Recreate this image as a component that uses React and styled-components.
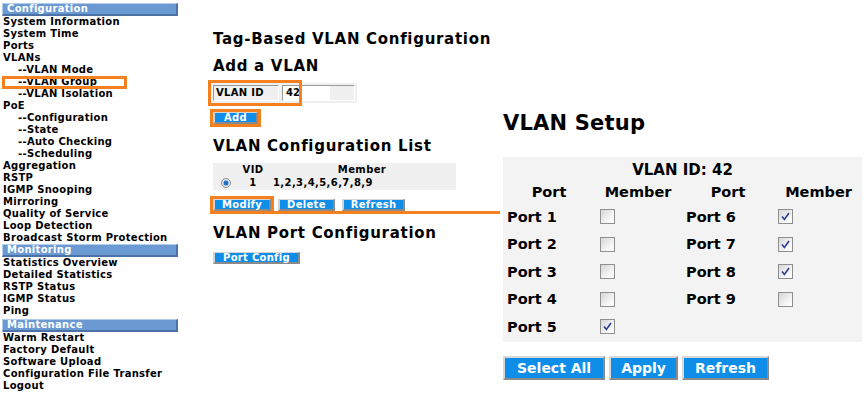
import React from "react";
import styled, { createGlobalStyle, css } from "styled-components";

const ORANGE = "#f5801f";
const BLUE = "#0e8ee8";

const GlobalStyle = createGlobalStyle`
    body {
        margin: 0;
        background: #fff;
        color: #000;
        font-family: "DejaVu Sans", Verdana, sans-serif;
        font-weight: bold;
    }
`;

const Page = styled.div`
    display: flex;
    align-items: flex-start;
    width: 868px;
    height: 395px;
    overflow: hidden;
`;

/* ---------- sidebar ---------- */

const Sidebar = styled.nav`
    width: 205px;
    flex-shrink: 0;
    box-sizing: border-box;
    padding: 3px 0 0 2px;
`;

const MenuHeader = styled.div`
    width: 176px;
    height: 13px;
    box-sizing: border-box;
    margin-top: ${(p) => p.$gap || 0}px;
    padding-left: 4px;
    background: #6b9ad3;
    border-style: solid;
    border-width: 1px 2px 2px 1px;
    border-color: #b3cdec #4a72a6 #4a72a6 #b3cdec;
    color: #fff;
    font-size: 10px;
    line-height: 10px;
    letter-spacing: 0.3px;
`;

const MenuItem = styled.div`
    position: relative;
    height: 12px;
    line-height: 12px;
    padding-left: ${(p) => (p.$sub ? 16 : 1)}px;
    font-size: 10px;
    letter-spacing: 0.3px;
    white-space: nowrap;
    ${(p) =>
        p.$active &&
        css`
            &::after {
                content: "";
                position: absolute;
                left: 0;
                top: 0;
                width: 125px;
                height: 13px;
                box-sizing: border-box;
                border: 3px solid ${ORANGE};
            }
        `}
`;

/* ---------- middle panel ---------- */

const Middle = styled.section`
    width: 295px;
    flex-shrink: 0;
    box-sizing: border-box;
    padding: 30px 0 0 8px;
    display: flex;
    flex-direction: column;
    align-items: flex-start;
`;

const Heading = styled.h2`
    margin: ${(p) => p.$top || 0}px 0 0 0;
    font-size: 15px;
    line-height: 18px;
    letter-spacing: 0.7px;
    white-space: nowrap;
`;

const InputRow = styled.div`
    position: relative;
    margin: 8px 0 0 -2px;
    width: 146px;
    height: 20px;
    box-sizing: border-box;
    padding: 2px;
    display: flex;
    gap: 3px;
    background: #f0f0f0;
    font-size: 10px;
    &::after {
        content: "";
        position: absolute;
        left: -3px;
        top: -3px;
        width: 94px;
        height: 26px;
        box-sizing: border-box;
        border: 3px solid ${ORANGE};
    }
`;

const LabelCell = styled.div`
    width: 66px;
    box-sizing: border-box;
    padding-left: 2px;
    border: 1px solid;
    border-color: #9a9a9a #fff #fff #9a9a9a;
    line-height: 14px;
    letter-spacing: 0.3px;
`;

const TextBox = styled.div`
    flex: 1;
    display: flex;
    border: 1px solid;
    border-color: #9a9a9a #fff #fff #9a9a9a;
    span {
        width: 47px;
        background: #fff;
        padding-left: 3px;
        line-height: 14px;
        box-sizing: border-box;
    }
`;

const SmallButton = styled.button`
    position: relative;
    height: 12px;
    box-sizing: border-box;
    padding: 0 ${(p) => p.$pad || 8}px;
    background: ${BLUE};
    border: 1px solid;
    border-width: 1px 2px 2px 2px;
    border-color: #d4d4d4 #8a8a8a #8a8a8a #d4d4d4;
    color: #fff;
    font-family: inherit;
    font-weight: bold;
    font-size: 10px;
    line-height: 8px;
    letter-spacing: 0.3px;
    ${(p) =>
        p.$marked &&
        css`
            outline: 3px solid ${ORANGE};
            outline-offset: 0;
        `}
`;

const Connector = styled.span`
    position: absolute;
    left: calc(100% + 3px);
    top: 11px;
    width: 228px;
    height: 3px;
    background: ${ORANGE};
`;

const ListTable = styled.div`
    margin-top: 8px;
    width: 243px;
    height: 27px;
    display: grid;
    grid-template-columns: 25px 30px 1fr;
    grid-template-rows: 13px 14px;
    align-items: center;
    background: #f0f0f0;
    font-size: 10px;
    letter-spacing: 0.4px;
`;

const ListCell = styled.div`
    text-align: ${(p) => p.$align || "center"};
    padding-left: ${(p) => (p.$align === "left" ? 5 : 0)}px;
    line-height: 12px;
`;

const Radio = styled.span`
    justify-self: center;
    width: 10px;
    height: 10px;
    border-radius: 50%;
    box-sizing: border-box;
    border: 1px solid #8c8c8c;
    background: radial-gradient(circle, #1d6fc4 0 2px, #8fb9e6 2.5px, #e9e9e9 3.5px);
`;

const ButtonRow = styled.div`
    display: flex;
    gap: ${(p) => p.$gap || 7}px;
    margin-top: ${(p) => p.$top || 0}px;
`;

/* ---------- right panel ---------- */

const Right = styled.section`
    padding: 110px 0 0 3px;
`;

const SetupTitle = styled.h1`
    margin: 0;
    font-size: 21px;
    line-height: 26px;
    letter-spacing: 0.2px;
`;

const SetupTable = styled.div`
    margin-top: 21px;
    width: 359px;
    display: grid;
    grid-template-columns: 92px 86px 94px 87px;
    grid-template-rows: 25px 21px repeat(5, 27.5px);
    background: #f3f3f3;
    padding-bottom: 1px;
    font-size: 14.5px;
`;

const TableTitle = styled.div`
    grid-column: 1 / -1;
    line-height: 27px;
    text-align: center;
    font-size: 15px;
`;

const HeadCell = styled.div`
    line-height: 21px;
    text-align: center;
`;

const PortCell = styled.div`
    display: flex;
    align-items: center;
    padding-left: ${(p) => p.$pad || 4}px;
`;

const Box = styled.span`
    width: 15px;
    height: 15px;
    box-sizing: border-box;
    border: 1px solid #8e8f8f;
    background: linear-gradient(135deg, #d6d6d6, #f7f7f7 70%, #fff);
    display: flex;
    align-items: center;
    justify-content: center;
`;

const BigButton = styled.button`
    height: 24px;
    box-sizing: border-box;
    padding: 0 ${(p) => p.$pad || 10}px;
    background: ${BLUE};
    border: 2px solid;
    border-color: #d8d8d8 #8a8a8a #8a8a8a #d8d8d8;
    color: #fff;
    font-family: inherit;
    font-weight: bold;
    font-size: 14px;
    line-height: 18px;
`;

const Check = ({ on }) => (
    <Box>
        {on && (
            <svg width="11" height="11" viewBox="0 0 11 11">
                <path d="M2 5.5 L4.4 8.4 L9 2" fill="none" stroke="#2b3f8f" strokeWidth="1.6" />
            </svg>
        )}
    </Box>
);

const menu = [
    { type: "head", label: "Configuration" },
    { label: "System Information" },
    { label: "System Time" },
    { label: "Ports" },
    { label: "VLANs" },
    { label: "--VLAN Mode", sub: true },
    { label: "--VLAN Group", sub: true, active: true },
    { label: "--VLAN Isolation", sub: true },
    { label: "PoE" },
    { label: "--Configuration", sub: true },
    { label: "--State", sub: true },
    { label: "--Auto Checking", sub: true },
    { label: "--Scheduling", sub: true },
    { label: "Aggregation" },
    { label: "RSTP" },
    { label: "IGMP Snooping" },
    { label: "Mirroring" },
    { label: "Quality of Service" },
    { label: "Loop Detection" },
    { label: "Broadcast Storm Protection" },
    { type: "head", label: "Monitoring" },
    { label: "Statistics Overview" },
    { label: "Detailed Statistics" },
    { label: "RSTP Status" },
    { label: "IGMP Status" },
    { label: "Ping" },
    { type: "head", label: "Maintenance", gap: 2 },
    { label: "Warm Restart" },
    { label: "Factory Default" },
    { label: "Software Upload" },
    { label: "Configuration File Transfer" },
    { label: "Logout" },
];

const members = [5, 6, 7, 8];

export default function App() {
    const rows = [1, 2, 3, 4, 5];
    return (
        <>
            <GlobalStyle />
            <Page>
                <Sidebar>
                    {menu.map((m) =>
                        m.type === "head" ? (
                            <MenuHeader key={m.label} $gap={m.gap}>
                                {m.label}
                            </MenuHeader>
                        ) : (
                            <MenuItem key={m.label} $sub={m.sub} $active={m.active}>
                                {m.label}
                            </MenuItem>
                        )
                    )}
                </Sidebar>

                <Middle>
                    <Heading>Tag-Based VLAN Configuration</Heading>
                    <Heading $top={9}>Add a VLAN</Heading>
                    <InputRow>
                        <LabelCell>VLAN ID</LabelCell>
                        <TextBox>
                            <span>42</span>
                        </TextBox>
                    </InputRow>
                    <ButtonRow $top={9}>
                        <SmallButton $marked $pad={9}>Add</SmallButton>
                    </ButtonRow>

                    <Heading $top={13}>VLAN Configuration List</Heading>
                    <ListTable>
                        <span />
                        <ListCell>VID</ListCell>
                        <ListCell>Member</ListCell>
                        <Radio />
                        <ListCell>1</ListCell>
                        <ListCell $align="left">1,2,3,4,5,6,7,8,9</ListCell>
                    </ListTable>
                    <ButtonRow $top={9}>
                        <SmallButton $marked $pad={7}>
                            Modify
                            <Connector />
                        </SmallButton>
                        <SmallButton $pad={7}>Delete</SmallButton>
                        <SmallButton $pad={7}>Refresh</SmallButton>
                    </ButtonRow>

                    <Heading $top={13}>VLAN Port Configuration</Heading>
                    <ButtonRow $top={10}>
                        <SmallButton $pad={8}>Port Config</SmallButton>
                    </ButtonRow>
                </Middle>

                <Right>
                    <SetupTitle>VLAN Setup</SetupTitle>
                    <SetupTable>
                        <TableTitle>VLAN ID: 42</TableTitle>
                        <HeadCell>Port</HeadCell>
                        <HeadCell>Member</HeadCell>
                        <HeadCell>Port</HeadCell>
                        <HeadCell>Member</HeadCell>
                        {rows.map((r) => (
                            <React.Fragment key={r}>
                                <PortCell>Port {r}</PortCell>
                                <PortCell $pad={5}>
                                    <Check on={members.includes(r)} />
                                </PortCell>
                                {r + 5 <= 9 ? (
                                    <>
                                        <PortCell $pad={5}>Port {r + 5}</PortCell>
                                        <PortCell $pad={3}>
                                            <Check on={members.includes(r + 5)} />
                                        </PortCell>
                                    </>
                                ) : (
                                    <>
                                        <span />
                                        <span />
                                    </>
                                )}
                            </React.Fragment>
                        ))}
                    </SetupTable>
                    <ButtonRow $top={14} $gap={4}>
                        <BigButton $pad={12}>Select All</BigButton>
                        <BigButton $pad={10}>Apply</BigButton>
                        <BigButton $pad={11}>Refresh</BigButton>
                    </ButtonRow>
                </Right>
            </Page>
        </>
    );
}
